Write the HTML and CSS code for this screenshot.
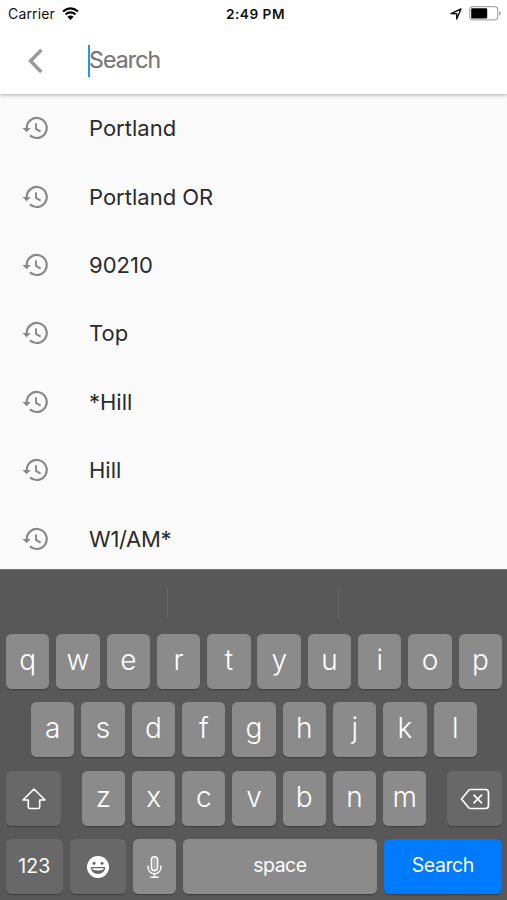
FILE: index.html
```html
<!DOCTYPE html>
<html lang="en">
<head>
<meta charset="utf-8">
<title>Search</title>
<link rel="stylesheet" href="styles.css">
</head>
<body>
<svg class="defs" aria-hidden="true">
  <symbol id="history" viewBox="0 0 26 24"><path d="M4.700 12a10 10 0 1 1 3.300 7.400" fill="none" stroke="#888" stroke-width="2.200"/><path d="M.5 12h8.200l-4.100 4.300z" fill="#888"/><path d="M14 7.200v5.700l4.600 2.700" fill="none" stroke="#888" stroke-width="1.900"/></symbol>
</svg>
<div class="screen">
  <header class="top">
    <div class="status">
      <div class="status-left"><span class="carrier">Carrier</span>
        <svg class="wifi" viewBox="0 0 17 13"><path d="M1 4.500Q8.500-1.700 16 4.500M3.500 7.400Q8.500 3.200 13.500 7.400" fill="none" stroke="#000" stroke-width="2.200"/><path d="M5.400 9.800Q8.500 7.200 11.600 9.800L8.500 12.900z"/></svg>
      </div>
      <span class="time">2:49 PM</span>
      <div class="status-right">
        <svg class="location" viewBox="0 0 12 12"><path d="M1 5.600 11 1 6.700 11V5.700z" fill="none" stroke="#111" stroke-width="1.400" stroke-linejoin="round"/></svg>
        <svg class="battery" viewBox="0 0 32 15"><rect x=".7" y=".7" width="28" height="13.200" rx="3.300" fill="#fff" stroke="#aaa" stroke-width="1.200"/><rect x="2.200" y="2.200" width="16" height="10.200" rx="1.200"/><path d="M30.200 5v4.600q1.500-.6 1.500-2.300t-1.500-2.300" fill="#999"/></svg>
      </div>
    </div>
    <div class="searchbar">
      <svg class="back" viewBox="0 0 16 26"><path d="M14.300 2 3.500 13l10.800 11" fill="none" stroke="#999" stroke-width="3.400"/></svg>
      <div class="field"><span class="placeholder">Search</span></div>
    </div>
  </header>
  <main class="list">
    <div class="item"><svg class="history"><use href="#history"/></svg><span>Portland</span></div>
    <div class="item"><svg class="history"><use href="#history"/></svg><span>Portland OR</span></div>
    <div class="item"><svg class="history"><use href="#history"/></svg><span>90210</span></div>
    <div class="item"><svg class="history"><use href="#history"/></svg><span>Top</span></div>
    <div class="item"><svg class="history"><use href="#history"/></svg><span>*Hill</span></div>
    <div class="item"><svg class="history"><use href="#history"/></svg><span>Hill</span></div>
    <div class="item"><svg class="history"><use href="#history"/></svg><span class="tight">W1/AM*</span></div>
  </main>
  <section class="keyboard">
    <div class="suggestions"><i></i><i></i><i></i></div>
    <div class="keys">
      <div class="row"><b class="key">q</b><b class="key">w</b><b class="key">e</b><b class="key">r</b><b class="key">t</b><b class="key">y</b><b class="key">u</b><b class="key">i</b><b class="key">o</b><b class="key">p</b></div>
      <div class="row middle"><b class="key">a</b><b class="key">s</b><b class="key">d</b><b class="key">f</b><b class="key">g</b><b class="key">h</b><b class="key">j</b><b class="key">k</b><b class="key">l</b></div>
      <div class="row spread">
        <b class="key dark shift"><svg class="shift-icon" viewBox="0 0 26 24"><path d="M13 2 2 13h5.300v7q0 1.500 1.500 1.500h8.400q1.500 0 1.500-1.500v-7H24z" fill="none" stroke="#fff" stroke-width="1.600" stroke-linejoin="round"/></svg></b>
        <div class="row letters"><b class="key">z</b><b class="key">x</b><b class="key">c</b><b class="key">v</b><b class="key">b</b><b class="key">n</b><b class="key">m</b></div>
        <b class="key dark shift"><svg class="delete-icon" viewBox="0 0 30 22"><path d="M10.500 1.500h15q3 0 3 3v13q0 3-3 3h-15q-1 0-2-1l-7-8.500 7-8.500q1-1 2-1z" fill="none" stroke="#fff" stroke-width="1.700" stroke-linejoin="round"/><path d="m13.500 6.700 8.600 8.600m0-8.600-8.600 8.600" stroke="#fff" stroke-width="1.700"/></svg></b>
      </div>
      <div class="row bottom">
        <b class="key dark word num">123</b>
        <b class="key dark"><svg class="emoji" viewBox="0 0 22 22"><circle cx="11" cy="11" r="11" fill="#fff"/><circle cx="7" cy="7.300" r="1.500" fill="#666"/><circle cx="15" cy="7.300" r="1.500" fill="#666"/><path d="M3.700 11h14.600q-.6 7-7.300 7t-7.300-7z" fill="#666"/><path d="M5 12.200h12q-.5 2.200-6 2.200t-6-2.200z" fill="#fff"/></svg></b>
        <b class="key"><svg class="mic" viewBox="0 0 16 24"><rect x="4.600" y="1" width="6.800" height="15" rx="3.400" fill="#aaa" stroke="#fff" stroke-width="1.500"/><path d="M1.200 10.500v2.200a6.800 6.500 0 0 0 13.600 0v-2.200M8 19.200V23M3.500 23h9" fill="none" stroke="#fff" stroke-width="1.500"/></svg></b>
        <b class="key word space">space</b>
        <b class="key word go">Search</b>
      </div>
    </div>
  </section>
</div>
</body>
</html>
```
FILE: styles.css
```css
* { box-sizing: border-box; }
body { margin: 0; font-family: Inter, "Liberation Sans", sans-serif; }
svg { display: block; }
.defs { display: none; }
.screen { width: 507px; height: 900px; display: flex; flex-direction: column; overflow: hidden; background: #fafafa; }
.top { height: 94px; flex: none; background: #fff; box-shadow: 0 1px 4px rgba(0,0,0,.32); z-index: 1; }
.status { height: 27px; display: grid; grid-template-columns: 1fr auto 1fr; align-items: center; padding: 0 6px 0 8px; color: #111; }
.status-left, .status-right { display: flex; align-items: center; }
.status-right { justify-content: flex-end; gap: 7px; }
.carrier { font-size: 14px; letter-spacing: .15px; }
.wifi { width: 17px; height: 13px; margin-left: 7px; }
.time { font-size: 13.700px; font-weight: 600; letter-spacing: .5px; padding-left: 2px; }
.location { width: 12px; height: 12px; }
.battery { width: 32px; height: 15px; }
.searchbar { height: 67px; display: flex; align-items: center; padding-left: 27px; }
.back { width: 16px; height: 26px; }
.field { margin-left: 45px; height: 32px; border-left: 2px solid #2196f3; display: flex; align-items: center; }
.placeholder { margin: -2px 0 0 -1px; color: #777; font-size: 23px; letter-spacing: -.85px; -webkit-text-stroke: .2px #777; }
.list { height: 475px; flex: none; }
.item { height: 68.400px; display: flex; align-items: center; padding-left: 22px; color: #2b2b2b; font-size: 22px; }
.tight { letter-spacing: -.3px; }
.history { width: 26px; height: 24px; margin-right: 41px; }
.keyboard { flex: 1; background: #585858; border-top: 1px solid #777; }
.suggestions { height: 64px; padding: 18px 0 16px; display: grid; grid-template-columns: 167px 171px 1fr; }
.suggestions i + i { border-left: 1px solid #686868; }
.keys { display: flex; flex-direction: column; gap: 13.600px; padding: 0 5px 0 6px; }
.row { display: flex; height: 54.800px; gap: 6.900px; }
.middle { padding: 0 25px; }
.spread { justify-content: space-between; }
.letters { width: 344.500px; }
.key { flex: 1 1 0; min-width: 0; display: flex; align-items: center; justify-content: center; border-radius: 5.500px; background: #8b8b8b; box-shadow: 0 1.300px 0 #424242; color: #fff; font-size: 28px; font-weight: 350; line-height: 1; padding-bottom: 3px; }
.dark { background: #686868; padding: 0; }
.spread > .shift { flex: 0 0 55px; }
.shift-icon { width: 26px; height: 24px; margin-top: 2px; }
.delete-icon { width: 30px; height: 22px; margin-top: 2px; }
.bottom { display: grid; grid-template-columns: 56.500px 56.500px 43.200px 193.200px 1fr; gap: 7.050px; }
.word { font-size: 19.500px; font-weight: 400; }
.num { padding-top: 1px; }
.space { padding-bottom: 1px; letter-spacing: -.5px; }
.emoji { width: 22px; height: 22px; margin-top: 1px; }
.mic { width: 15px; height: 24px; margin-top: 4px; }
.go { background: #007aff; letter-spacing: -.45px; padding-bottom: 1px; }
```
